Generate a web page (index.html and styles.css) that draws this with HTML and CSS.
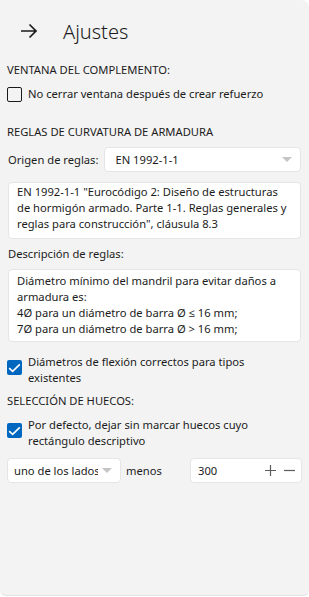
FILE: index.html
```html
<!DOCTYPE html>
<html lang="es">
<head>
    <meta charset="UTF-8">
    <meta name="viewport" content="width=device-width, initial-scale=1.0">
    <title>Ajustes</title>
    <link rel="stylesheet" href="styles.css">
</head>
<body>
    <div class="panel">
        <div class="header">
            <svg class="back" width="18" height="16" viewBox="0 0 18 16">
                <path d="M1 8 H16 M9.5 1.5 L16 8 L9.5 14.5" fill="none" stroke="#1b1b1b" stroke-width="1.7"/>
            </svg>
            <h1>Ajustes</h1>
        </div>

        <p class="section">VENTANA DEL COMPLEMENTO:</p>
        <label class="check">
            <span class="box"></span>
            <span>No cerrar ventana después de crear refuerzo</span>
        </label>

        <p class="section gap">REGLAS DE CURVATURA DE ARMADURA</p>
        <div class="row">
            <span class="label">Origen de reglas:</span>
            <div class="select wide">
                <span>EN 1992-1-1</span>
                <span class="caret"></span>
            </div>
        </div>
        <div class="textbox first">EN 1992-1-1 "Eurocódigo 2: Diseño de estructuras de hormigón armado. Parte 1-1. Reglas generales y reglas para construcción", cláusula 8.3</div>

        <p class="label sub">Descripción de reglas:</p>
        <div class="textbox">Diámetro mínimo del mandril para evitar daños a armadura es:<br>4Ø para un diámetro de barra Ø ≤ 16 mm;<br>7Ø para un diámetro de barra Ø &gt; 16 mm;</div>

        <label class="check checked tall">
            <span class="box"><svg width="13" height="10" viewBox="0 0 13 10"><path d="M1.2 5.2 L4.6 8.4 L11.8 1.4" fill="none" stroke="#fff" stroke-width="1.6"/></svg></span>
            <span>Diámetros de flexión correctos para tipos<br>existentes</span>
        </label>

        <p class="section">SELECCIÓN DE HUECOS:</p>
        <label class="check checked">
            <span class="box"><svg width="13" height="10" viewBox="0 0 13 10"><path d="M1.2 5.2 L4.6 8.4 L11.8 1.4" fill="none" stroke="#fff" stroke-width="1.6"/></svg></span>
            <span>Por defecto, dejar sin marcar huecos cuyo rectángulo descriptivo</span>
        </label>

        <div class="row bottom">
            <div class="select small">
                <span class="clip">uno de los lados</span>
                <span class="caret"></span>
            </div>
            <span class="label">menos</span>
            <div class="number">
                <span>300</span>
                <span class="spin">
                    <svg width="11" height="11" viewBox="0 0 11 11"><path d="M0 5.5 H11 M5.5 0 V11" stroke="#5c5c5c" stroke-width="1.2"/></svg>
                    <svg width="11" height="11" viewBox="0 0 11 11"><path d="M0 5.5 H11" stroke="#5c5c5c" stroke-width="1.2"/></svg>
                </span>
            </div>
        </div>
    </div>
</body>
</html>
```

FILE: styles.css
```css
html, body {
    margin: 0;
    background: #fff;
}
body {
    font-family: "Noto Sans", "Open Sans", sans-serif;
    font-size: 11.2px;
    color: #1b1b1b;
}
.panel {
    background: #f3f3f3;
    height: 596px;
    border-radius: 0 8px 6px 6px;
    border-bottom: 1px solid #e2e2e2;
    padding: 0 7px 0 7px;
    box-sizing: border-box;
}
.header {
    display: flex;
    align-items: center;
    height: 62px;
    padding-left: 13px;
}
.back {
    margin-right: 25px;
}
h1 {
    font-weight: 300;
    font-size: 20px;
    margin: 0;
    color: #1b1b1b;
}
p {
    margin: 0;
}
.section {
    line-height: 16px;
    margin-bottom: 8px;
}
.section.gap {
    margin-top: 22px;
    margin-bottom: 7px;
}
.check {
    display: flex;
    align-items: flex-start;
    line-height: 16px;
}
.check .box {
    flex: none;
    width: 13px;
    height: 13px;
    border: 1px solid #1b1b1b;
    border-radius: 2px;
    margin: 1px 6px 0 0;
    display: flex;
    align-items: center;
    justify-content: center;
}
.check.checked .box {
    width: 15px;
    height: 15px;
    border: none;
    background: #0067c0;
    margin-top: 6px;
}
.check.tall {
    margin-top: 12px;
    margin-bottom: 7px;
}
.row {
    display: flex;
    align-items: center;
}
.label {
    white-space: nowrap;
}
.row .label {
    margin-left: 1px;
    margin-right: 6px;
}
.select, .number, .textbox {
    background: #fff;
    border: 1px solid #e5e5e5;
    border-radius: 4px;
    box-sizing: border-box;
}
.select {
    display: flex;
    align-items: center;
    height: 25px;
    padding: 0 8px 0 10px;
}
.select.wide {
    flex: 1;
    margin-right: 1px;
}
.select span:first-child {
    flex: 1;
}
.caret {
    flex: none;
    width: 0;
    height: 0;
    border-left: 5px solid transparent;
    border-right: 5px solid transparent;
    border-top: 5px solid #c5c5c5;
}
.textbox {
    margin: 0 1px;
    padding: 3px 8px 4px 8px;
    line-height: 16px;
}
.textbox.first {
    margin-top: 10px;
    padding-top: 1px;
    padding-bottom: 6px;
}
.sub {
    margin: 7px 0 7px 1px;
    line-height: 16px;
}
.bottom {
    margin-top: 9px;
}
.select.small {
    width: 114px;
    padding-left: 6px;
    margin-right: 4px;
}
.clip {
    overflow: hidden;
    white-space: nowrap;
    margin-right: 4px;
}
.number {
    display: flex;
    align-items: center;
    width: 112px;
    height: 25px;
    margin-left: auto;
    padding: 0 6px 0 7px;
}
.number span:first-child {
    flex: 1;
}
.spin {
    display: flex;
    gap: 8px;
}
```
